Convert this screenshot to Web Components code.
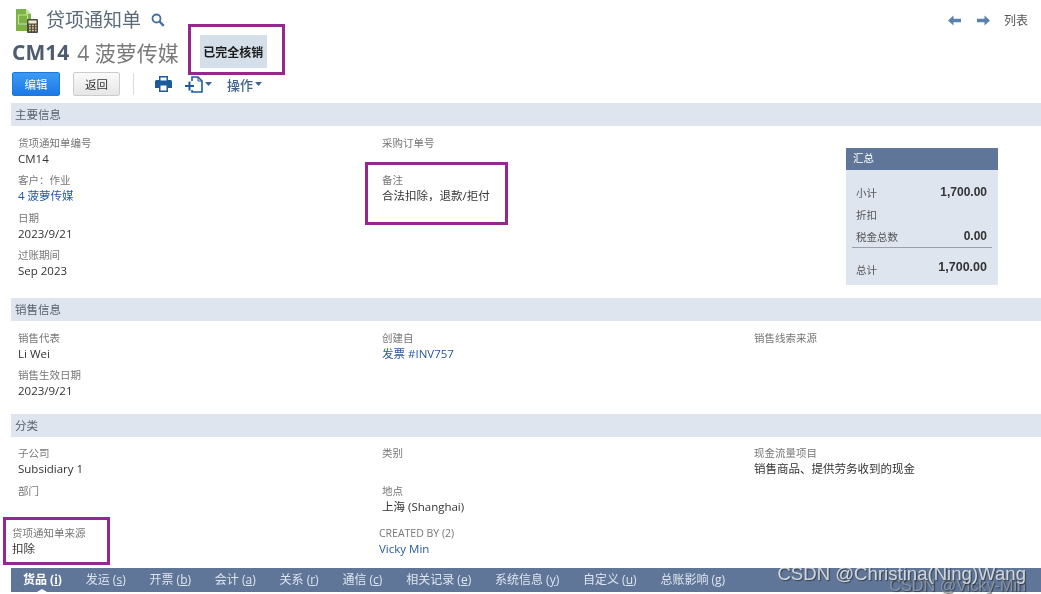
<!DOCTYPE html>
<html lang="zh">
<head>
<meta charset="utf-8">
<title>贷项通知单</title>
<style>
    html, body { margin: 0; background: #fff; }
    body {
        width: 1041px;
        height: 594px;
        overflow: hidden;
        font-family: "Open Sans", "Noto Sans CJK SC", sans-serif;
        font-size: 12px;
        color: #333;
    }
</style>
</head>
<body>
<ns-page>
    <ns-header></ns-header>

    <ns-section title="主要信息" pad="9.5px 0 12.5px">
        <div>
            <ns-field label="货项通知单编号">CM14</ns-field>
            <ns-field label="客户：作业" link>4 菠萝传媒</ns-field>
            <ns-field label="日期">2023/9/21</ns-field>
            <ns-field label="过账期间">Sep 2023</ns-field>
        </div>
        <div>
            <ns-field label="采购订单号"></ns-field>
            <ns-field label="备注">合法扣除，退款/拒付</ns-field>
        </div>
        <ns-summary></ns-summary>
    </ns-section>

    <ns-section title="销售信息" pad="9.5px 0 8.5px">
        <div>
            <ns-field label="销售代表">Li Wei</ns-field>
            <ns-field label="销售生效日期">2023/9/21</ns-field>
        </div>
        <ns-field label="创建自" link>发票 #INV757</ns-field>
        <ns-field label="销售线索来源"></ns-field>
    </ns-section>

    <ns-section title="分类" pad="9px 0 4.5px">
        <div>
            <ns-field label="子公司">Subsidiary 1</ns-field>
            <ns-field label="部门"></ns-field>
            <ns-field label="贷项通知单来源" shift="-6px" gap="5px">扣除</ns-field>
        </div>
        <div>
            <ns-field label="类别"></ns-field>
            <ns-field label="地点">上海 (Shanghai)</ns-field>
            <ns-field label="CREATED BY (2)" link shift="-3px" gap="5px">Vicky Min</ns-field>
        </div>
        <ns-field label="现金流量项目">销售商品、提供劳务收到的现金</ns-field>
    </ns-section>

    <ns-tabs></ns-tabs>

    <ns-callout style="left:188px;top:24px;width:97px;height:51px"></ns-callout>
    <ns-callout style="left:365px;top:162px;width:143px;height:63px"></ns-callout>
    <ns-callout style="left:3px;top:517px;width:107px;height:48px"></ns-callout>
    <ns-watermark></ns-watermark>
</ns-page>

<script>
class NsPage extends HTMLElement {
    constructor() {
        super();
        this.attachShadow({ mode: 'open' });
        this.shadowRoot.innerHTML = `
            <style>
                :host {
                    display: block;
                    position: relative;
                    width: 1041px;
                    height: 594px;
                    filter: blur(0.5px);
                }
            </style>
            <slot></slot>
        `;
    }
}

class NsHeader extends HTMLElement {
    constructor() {
        super();
        this.attachShadow({ mode: 'open' });
        this.shadowRoot.innerHTML = `
            <style>
                :host {
                    display: block;
                    height: 103px;
                    box-sizing: border-box;
                    padding: 8px 13px 0 12px;
                    color: #555;
                }
                svg { display: block; flex: none; }
                .top { display: flex; align-items: center; height: 24px; }
                .top svg.logo { margin: 0 7px 0 3px; }
                .page-title { font-size: 19px; line-height: 24px; color: #5a6a78; }
                .search { margin-left: 10px; }
                .nav { margin-left: auto; display: flex; align-items: center; color: #555; font-size: 12px; }
                .nav svg + svg { margin-left: 16px; }
                .nav span { margin-left: 14px; }
                .record { display: flex; align-items: center; height: 35px; margin-top: 2px; }
                .id { font-size: 21px; font-weight: 700; color: #4d5d6e; }
                .name { font-size: 21px; color: #7a7a7a; margin-left: 8px; }
                .status {
                    margin-left: 21px;
                    width: 67px;
                    height: 33px;
                    background: #d5dfea;
                    color: #1c1c1c;
                    font-size: 12px;
                    font-weight: 700;
                    display: flex;
                    align-items: center;
                    justify-content: center;
                }
                .actions { display: flex; align-items: center; height: 26px; margin-top: 2px; }
                button {
                    font: inherit;
                    padding: 0;
                    box-sizing: border-box;
                    height: 24px;
                    border-radius: 2px;
                    font-size: 11.5px;
                }
                .edit {
                    width: 48px;
                    color: #fff;
                    border: 1px solid #1f78d8;
                    background: linear-gradient(#3d9bf5, #1b78e6);
                }
                .back {
                    width: 47px;
                    margin-left: 13px;
                    color: #333;
                    border: 1px solid #ccc;
                    background: linear-gradient(#fafafa, #e6e6e6);
                }
                .sep { width: 1px; height: 22px; background: #dcdcdc; margin: 0 21px 0 13px; }
                .caret { margin-left: 2px; }
                .new { margin-left: 13px; }
                .more { margin-left: 15px; color: #3f638f; font-size: 13px; font-weight: 500; }
            </style>
            <div class="top">
                <svg class="logo" width="24" height="25" viewBox="0 0 24 25">
                    <path d="M1 1h10l5 5v17H1z" fill="#7cb342"/>
                    <path d="M11 1l5 5h-5z" fill="#c5e1a5"/>
                    <rect x="3.5" y="7" width="9" height="9" fill="none" stroke="#c5e1a5" stroke-width="1"/>
                    <rect x="12" y="11" width="11" height="14" rx="1" fill="#4e4a3f"/>
                    <rect x="13.5" y="12.5" width="8" height="3" fill="#f1e9d0"/>
                    <path d="M14 17.500h1.800M17 17.500h1.800M20 17.500h1.500M14 20h1.800M17 20h1.800M20 20h1.500M14 22.500h1.800M17 22.500h1.800M20 22.500h1.500" stroke="#e0c9a0" stroke-width="1.400"/>
                </svg>
                <span class="page-title">贷项通知单</span>
                <svg class="search" width="14" height="14" viewBox="0 0 14 14" fill="none" stroke="#44709e" stroke-width="1.800">
                    <circle cx="5.500" cy="5.500" r="4"/>
                    <path d="M8.500 8.500l4.300 4.300" stroke-width="2.400"/>
                </svg>
                <div class="nav">
                    <svg width="13" height="11" viewBox="0 0 13 11" fill="#5b82aa"><path d="M0 5.500L5.500 .5v3.200H13v3.600H5.500v3.200z"/></svg>
                    <svg width="13" height="11" viewBox="0 0 13 11" fill="#5b82aa"><path d="M13 5.500L7.500 .5v3.200H0v3.600h7.500v3.200z"/></svg>
                    <span>列表</span>
                </div>
            </div>
            <div class="record">
                <span class="id">CM14</span>
                <span class="name">4 菠萝传媒</span>
                <span class="status">已完全核销</span>
            </div>
            <div class="actions">
                <button class="edit">编辑</button>
                <button class="back">返回</button>
                <span class="sep"></span>
                <svg width="17" height="16" viewBox="0 0 17 16">
                    <path d="M4 0h9v4h2.500A1.500 1.500 0 0 1 17 5.500V12h-4v4H4v-4H0V5.500A1.500 1.500 0 0 1 1.500 4H4z" fill="#1c5a9c"/>
                    <rect x="5.500" y="1.500" width="6" height="3" fill="#fff"/>
                    <rect x="5.500" y="9.500" width="6" height="5" fill="#fff"/>
                </svg>
                <svg class="new" width="18" height="17" viewBox="0 0 18 17" fill="none" stroke="#1c5a9c" stroke-width="1.600">
                    <path d="M7 5V1h6l4 4v11H7v-2"/>
                    <path d="M13 1v4h4" stroke-width="1"/>
                    <path d="M0 10h9M4.500 5.500v9" stroke-width="2"/>
                </svg>
                <svg class="caret" width="7" height="4" viewBox="0 0 7 4" fill="#3f638f"><path d="M0 0h7L3.500 4z"/></svg>
                <span class="more">操作</span>
                <svg class="caret" width="7" height="4" viewBox="0 0 7 4" fill="#3f638f"><path d="M0 0h7L3.500 4z"/></svg>
            </div>
        `;
    }
}

class NsSection extends HTMLElement {
    constructor() {
        super();
        this.attachShadow({ mode: 'open' });
        this.shadowRoot.innerHTML = `
            <style>
                :host { display: block; margin-left: 11px; }
                .bar {
                    height: 23px;
                    line-height: 23px;
                    padding-left: 4px;
                    background: #dfe5ef;
                    color: #555f6d;
                    font-size: 11.5px;
                }
                .body {
                    display: grid;
                    grid-template-columns: 364px 372px 1fr;
                    align-items: start;
                }
            </style>
            <div class="bar"></div>
            <div class="body"><slot></slot></div>
        `;
    }

    connectedCallback() {
        this.shadowRoot.querySelector('.bar').textContent = this.getAttribute('title');
        this.removeAttribute('title');
        const body = this.shadowRoot.querySelector('.body');
        body.style.padding = this.getAttribute('pad');
        body.style.paddingLeft = '7px';
    }
}

class NsField extends HTMLElement {
    constructor() {
        super();
        this.attachShadow({ mode: 'open' });
        this.shadowRoot.innerHTML = `
            <style>
                :host { display: block; height: 37.5px; line-height: 15px; }
                .label { color: #777; font-size: 10.5px; height: 15px; }
                .value { color: #333; font-size: 11.5px; height: 15px; }
                :host([link]) .value { color: #255a9e; }
            </style>
            <div class="label"></div>
            <div class="value"><slot></slot></div>
        `;
    }

    connectedCallback() {
        this.shadowRoot.querySelector('.label').textContent = this.getAttribute('label');
        if (this.hasAttribute('shift')) this.style.marginLeft = this.getAttribute('shift');
        if (this.hasAttribute('gap')) this.style.marginTop = this.getAttribute('gap');
    }
}

class NsSummary extends HTMLElement {
    constructor() {
        super();
        this.attachShadow({ mode: 'open' });
        this.shadowRoot.innerHTML = `
            <style>
                :host {
                    display: block;
                    width: 152px;
                    height: 137px;
                    margin: 12.5px 0 0 92px;
                    background: #dfe5ef;
                    color: #555;
                    font-size: 10.5px;
                }
                .head {
                    height: 22px;
                    line-height: 21px;
                    padding-left: 7px;
                    background: #5f7699;
                    color: #fff;
                }
                .row {
                    display: flex;
                    justify-content: space-between;
                    align-items: center;
                    height: 22px;
                    padding: 0 11px 0 10px;
                }
                .rows { padding-top: 11px; }
                b { font-family: "Liberation Sans", sans-serif; color: #333; font-size: 12px; }
                .row.total {
                    height: auto;
                    margin: 0 6px;
                    padding: 14px 5px 0 4px;
                    border-top: 1px solid #9a9fa8;
                    align-items: flex-start;
                    line-height: 16px;
                }
                .total b { font-size: 12.5px; margin-top: -3px; }
            </style>
            <div class="head">汇总</div>
            <div class="rows">
                <div class="row"><span>小计</span><b>1,700.00</b></div>
                <div class="row"><span>折扣</span></div>
                <div class="row"><span>税金总数</span><b>0.00</b></div>
                <div class="row total"><span>总计</span><b>1,700.00</b></div>
            </div>
        `;
    }
}

class NsTabs extends HTMLElement {
    constructor() {
        super();
        this.attachShadow({ mode: 'open' });
        const tabs = [
            ['货品', 'i'], ['发运', 's'], ['开票', 'b'], ['会计', 'a'], ['关系', 'r'],
            ['通信', 'c'], ['相关记录', 'e'], ['系统信息', 'y'], ['自定义', 'u'], ['总账影响', 'g']
        ];
        this.shadowRoot.innerHTML = `
            <style>
                :host {
                    display: flex;
                    gap: 23.8px;
                    margin-left: 11px;
                    height: 24px;
                    padding-left: 12px;
                    background: #5f7699;
                    color: #dfe5ef;
                    font-size: 12px;
                    line-height: 24px;
                    white-space: nowrap;
                }
                span { position: relative; }
                u { text-underline-offset: 1px; }
                .active { color: #fff; font-weight: 700; }
                .active::after {
                    content: "";
                    position: absolute;
                    left: 50%;
                    bottom: 0;
                    margin-left: -5px;
                    border: 5px solid transparent;
                    border-top: 0;
                    border-bottom: 3px solid #fff;
                }
            </style>
            ${tabs.map((a, i) => `<span class="${i == 0 ? 'active' : ''}">${a[0]} (<u>${a[1]}</u>)</span>`).join('')}
        `;
    }
}

class NsCallout extends HTMLElement {
    constructor() {
        super();
        this.attachShadow({ mode: 'open' });
        this.shadowRoot.innerHTML = `
            <style>
                :host {
                    display: block;
                    position: absolute;
                    box-sizing: border-box;
                    border: 3px solid #94288f;
                }
            </style>
        `;
    }
}

class NsWatermark extends HTMLElement {
    constructor() {
        super();
        this.attachShadow({ mode: 'open' });
        this.shadowRoot.innerHTML = `
            <style>
                :host { display: block; }
                div {
                    position: absolute;
                    right: 15px;
                    font-family: "Liberation Sans", sans-serif;
                    white-space: nowrap;
                    color: rgba(255, 255, 255, .75);
                    text-shadow: 1px 1px 1px rgba(40, 40, 40, .7);
                }
                .one { top: 563px; font-size: 18.6px; line-height: 22px; }
                .two { top: 576px; font-size: 16.2px; line-height: 18px; color: rgba(150, 160, 175, .8); }
            </style>
            <div class="two">CSDN @Vicky-Min</div>
            <div class="one">CSDN @Christina(Ning)Wang</div>
        `;
    }
}

customElements.define('ns-page', NsPage);
customElements.define('ns-header', NsHeader);
customElements.define('ns-section', NsSection);
customElements.define('ns-field', NsField);
customElements.define('ns-summary', NsSummary);
customElements.define('ns-tabs', NsTabs);
customElements.define('ns-callout', NsCallout);
customElements.define('ns-watermark', NsWatermark);
</script>
</body>
</html>
